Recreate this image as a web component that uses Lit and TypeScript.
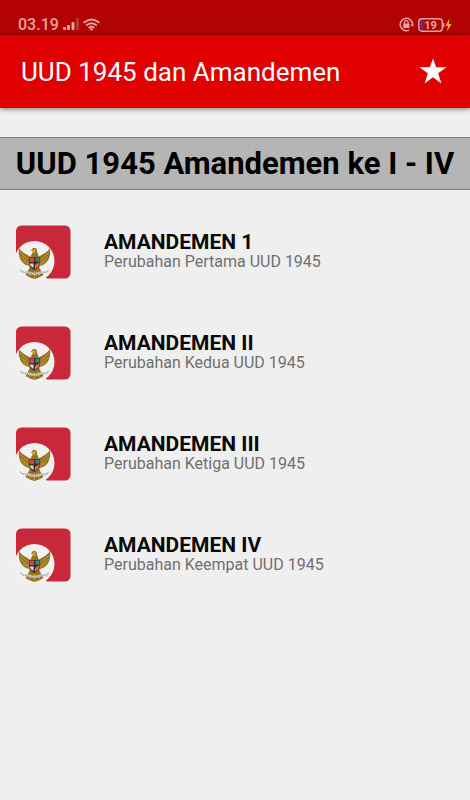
import { LitElement, html, css, svg } from "lit";
import { customElement, property } from "lit/decorators.js";

@customElement("status-bar")
class StatusBar extends LitElement {
  static styles = css`
    :host { display: flex; align-items: center; justify-content: space-between; height: 35px;
      padding: 14px 18px 0 18px; box-sizing: border-box; background: #b20202; color: #e6a3a3; }
    .side { display: flex; align-items: center; gap: 4px; }
    .time { font-size: 16px; line-height: 20px; font-weight: 500; }
    svg { display: block; }
    .level { fill: #eab0b0; font: 700 11px Roboto, sans-serif; }
  `;
  render() {
    return html`
      <div class="side">
        <span class="time">03.19</span>
        <svg width="16" height="14" viewBox="0 0 16 14" fill="#e6a3a3">
          <rect x="0" y="9" width="3" height="3" rx="1" />
          <rect x="4" y="7" width="3" height="5" rx="1" />
          <rect x="8.500" y="4" width="3" height="8" rx="1" />
          <rect x="13" y="0" width="3" height="12" rx="1" opacity=".3" />
        </svg>
        <svg width="17" height="14" viewBox="0 0 17 14" fill="none" stroke="#e6a3a3" stroke-width="1.900">
          <path d="M.7 4.800Q8.500-1.800 16.300 4.800M3.200 7.500Q8.500 3 13.800 7.500M5.700 10Q8.500 7.600 11.300 10" />
          <path d="M6.800 11Q8.500 9.700 10.200 11L8.500 13Z" fill="#e6a3a3" stroke="none" />
        </svg>
      </div>
      <div class="side">
        <svg width="15" height="15" viewBox="0 0 15 15" fill="none" stroke="#e6a3a3">
          <path d="M10.200 13.100A6.200 6.200 0 1 1 13.600 7.500" stroke-width="1.500" />
          <path d="M11.500 7.300h3.500l-1.800 2.800z" fill="#e6a3a3" stroke="none" />
          <rect x="4.200" y="6.500" width="6.200" height="4.500" rx=".6" fill="#e6a3a3" stroke="none" />
          <path d="M5.400 6.800V5.500a1.900 1.900 0 0 1 3.800 0v1.300" stroke-width="1.200" />
        </svg>
        <svg width="34" height="16" viewBox="0 0 34 16">
          <rect x="1.500" y="2.500" width="4" height="11" fill="#8a2350" />
          <rect x=".8" y="1.800" width="23.500" height="12.400" rx="3" fill="none" stroke="#e6a3a3" stroke-width="1.400" />
          <path d="M25 5.500q1.500 0 1.500 2.500T25 10.500z" fill="#e6a3a3" />
          <text class="level" x="12.500" y="12" text-anchor="middle">19</text>
          <path d="M31.500 1.500L27.500 8.800H30L29 14.500 33.500 7H30.800Z" fill="#f9b03c" />
        </svg>
      </div>`;
  }
}

const emblem = svg`
  <path d="M1 7a5.500 5.500 0 0 1 5.500-5.500H50a5.500 5.500 0 0 1 5.500 5.500V49a5.500 5.500 0 0 1-5.500 5.500H32L1 30Z" fill="#c9283a" />
  <circle cx="19.500" cy="37" r="20" fill="#f1f1f1" />
  <g fill="#94721f">
    <path d="M16 42C8 42 2.500 35 4 24C7 29 12 30 16 33.500Z" />
    <path d="M23 42C31 42 36.500 35 35 24C32 29 27 30 23 33.500Z" />
    <path d="M16 26.500L18 24H20.500Q22.500 25 22 28L24.500 34V44L28.500 51L24 53.500 19.500 55 15 53.500 10.500 51L14.500 44V34L18 28Z" />
  </g>
  <path d="M5 28L13 35.500M5.500 32L13 38.500M7.500 36.500L14 40.500M34 28L26 35.500M33.500 32L26 38.500M31.500 36.500L25 40.500M16 47L14 52M19.500 47V54M23 47L25 52" stroke="#c2a14b" stroke-width=".9" />
  <path d="M16.500 26L20.500 25 20 30Z" fill="#d3a73a" />
  <path d="M14 33H25V39Q24.500 44 19.500 46Q14.500 44 14 39Z" fill="#333" />
  <path d="M14.500 33.500H19V38H14.500Z" fill="#d8433f" />
  <path d="M20.500 33.500H24.500V37.500H20.500Z" fill="#38877a" />
  <path d="M14.500 39.500H18.500V44Q15 42 14.500 39.500Z" fill="#e6d5c8" />
  <path d="M20 41L24.500 38Q24.500 43 20 45Z" fill="#e36b45" />
  <path d="M5 45.500Q8 49.500 12 48Q20 51.500 27 48Q32 49.500 34 45.500" fill="none" stroke="#d0d0cc" stroke-width="2" />
  <path d="M6 47.500Q20 51 33 47.500" fill="none" stroke="#888" stroke-width=".8" stroke-dasharray="1 1" />`;

@customElement("amendment-item")
class AmendmentItem extends LitElement {
  static styles = css`
    :host { display: block; }
    .row { display: flex; align-items: center; width: 100%; padding: 0 15px; gap: 33px;
      min-height: 57px; border: 0; background: none; font: inherit; text-align: left; cursor: pointer; }
    svg { flex: none; display: block; }
    .text { display: flex; flex-direction: column; padding-bottom: 4px; }
    .name { font-size: 21px; line-height: 22px; font-weight: 700; color: #0a0a0a; }
    .note { font-size: 16px; line-height: 18px; font-weight: 400; color: #707070; }
  `;
  @property() heading = "";
  @property() note = "";
  render() {
    return html`<button class="row">
      <svg width="56" height="57" viewBox="0 0 56 57" aria-hidden="true">${emblem}</svg>
      <span class="text"><span class="name">${this.heading}</span><span class="note">${this.note}</span></span>
    </button>`;
  }
}

@customElement("app-root")
class AppRoot extends LitElement {
  static styles = css`
    :host { display: block; min-height: 100vh; background: #efefef; font-family: Roboto, sans-serif; }
    .bar { display: flex; align-items: center; justify-content: space-between; height: 73px;
      padding: 0 23px 0 21px; background: #e00000; box-shadow: 0 1px 5px rgba(0, 0, 0, .5); }
    .title { margin: 0; font-size: 26px; line-height: 32px; font-weight: 400; color: #fff; }
    .star { padding: 0; border: 0; background: none; cursor: pointer; }
    .star svg { display: block; }
    .band { margin: 29px 0 0; padding: 6px 0; border: solid #7c7c7c; border-width: 1px 0; background: #b5b5b5;
      font-size: 31px; line-height: 39px; font-weight: 700; text-align: center; color: #000; }
    .list { display: flex; flex-direction: column; gap: 44px; margin: 0; padding: 34px 0 0; list-style: none; }
  `;
  items = [
    ["AMANDEMEN 1", "Perubahan Pertama UUD 1945"],
    ["AMANDEMEN II", "Perubahan Kedua UUD 1945"],
    ["AMANDEMEN III", "Perubahan Ketiga UUD 1945"],
    ["AMANDEMEN IV", "Perubahan Keempat UUD 1945"],
  ];
  render() {
    return html`
      <status-bar></status-bar>
      <header class="bar">
        <h1 class="title">UUD 1945 dan Amandemen</h1>
        <button class="star" aria-label="Favorit">
          <svg width="28" height="28" viewBox="0 0 28 28"><path fill="#fff" d="M14 .5L17.200 9.300H27.500L19.200 15.300 22.400 25.500 14 19.200 5.600 25.500 8.800 15.300.5 9.300H10.800Z" /></svg>
        </button>
      </header>
      <main>
        <h2 class="band">UUD 1945 Amandemen ke I - IV</h2>
        <ul class="list">
          ${this.items.map(([h, n]) => html`<li><amendment-item .heading=${h} .note=${n}></amendment-item></li>`)}
        </ul>
      </main>`;
  }
}
